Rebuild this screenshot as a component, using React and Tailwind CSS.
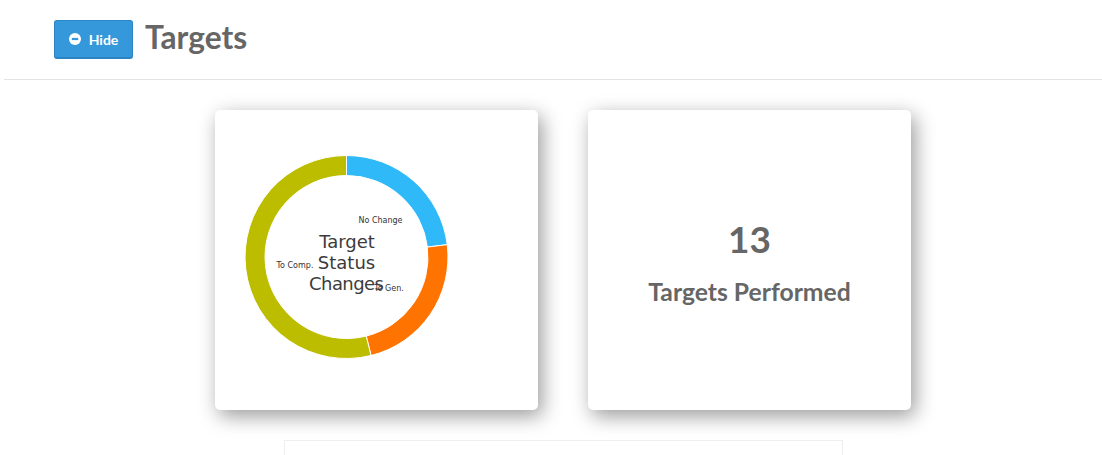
const F = { fontFamily: 'Lato, sans-serif' };
const cx = 346.5 - 245, cy = 257 - 155, R = 101.5, r = 81.5;
function arc(a0, a1) {
  const p = (rad, a) => {
    const t = (a * Math.PI) / 180;
    return `${(cx + rad * Math.sin(t)).toFixed(2)} ${(cy - rad * Math.cos(t)).toFixed(2)}`;
  };
  const large = a1 - a0 > 180 ? 1 : 0;
  return `M${p(R, a0)}A${R} ${R} 0 ${large} 1 ${p(R, a1)}L${p(r, a1)}A${r} ${r} 0 ${large} 0 ${p(r, a0)}Z`;
}
function Donut() {
  const font = '"DejaVu Sans", sans-serif';
  return (
    <svg width="204" height="206" viewBox="0 0 204 206" className="block" style={{ fontFamily: font }}>
      <path d={arc(0, 83)} fill="#2fb9f9" stroke="#fff" strokeWidth="1" />
      <path d={arc(83, 166)} fill="#ff7300" stroke="#fff" strokeWidth="1" />
      <path d={arc(166, 360)} fill="#bdbd00" stroke="#fff" strokeWidth="1" />
      <g fill="#333" fontSize="8" textAnchor="middle">
        <text x="135.5" y="68">No Change</text>
        <text x="50" y="113">To Comp.</text>
        <text x="144" y="136">To Gen.</text>
      </g>
      <g fill="#3c3c3c" fontSize="18" textAnchor="middle">
        <text x="102" y="93">Target</text>
        <text x="101.5" y="114">Status</text>
        <text x="101.5" y="135" textLength="75">Changes</text>
      </g>
    </svg>
  );
}
export default function App() {
  return (
    <div className="w-[1102px] h-[455px] overflow-hidden bg-white" style={F}>
      <div className="ml-[4px] h-[80px] border-b border-[#e3e3e3] pl-[50px] pt-[20px] flex items-start gap-[12px]">
        <button className="w-[79px] h-[39px] rounded-[3px] bg-[#3498db] border border-[#2a85c4] border-b-[2px] text-white text-[14px] font-bold flex items-center justify-center gap-[8px]">
          <svg width="12" height="12" viewBox="0 0 12 12"><circle cx="6" cy="6" r="6" fill="#fff" /><rect x="2.8" y="4.9" width="6.4" height="2.2" fill="#3498db" /></svg>
          Hide
        </button>
        <h1 className="text-[31.7px] leading-[34px] font-bold text-[#666666]">Targets</h1>
      </div>
      <div className="mt-[30px] flex justify-center gap-[50px] pl-[24px]">
        <div className="w-[323px] h-[300px] bg-white rounded-[5px] shadow-[4px_6px_20px_rgba(0,0,0,0.4)] pl-[30px] pt-[45px]">
          <Donut />
        </div>
        <div className="w-[323px] h-[300px] bg-white rounded-[5px] shadow-[4px_6px_20px_rgba(0,0,0,0.4)] flex flex-col items-center text-[#666666] font-bold pt-[106px]">
          <div className="text-[37px] leading-[46px]">13</div>
          <div className="text-[24.7px] leading-[30px] mt-[15px]">Targets Performed</div>
        </div>
      </div>
      <div className="mt-[30px] ml-[284px] w-[559px] h-[40px] border border-[#eeeeee] bg-white" />
    </div>
  );
}
